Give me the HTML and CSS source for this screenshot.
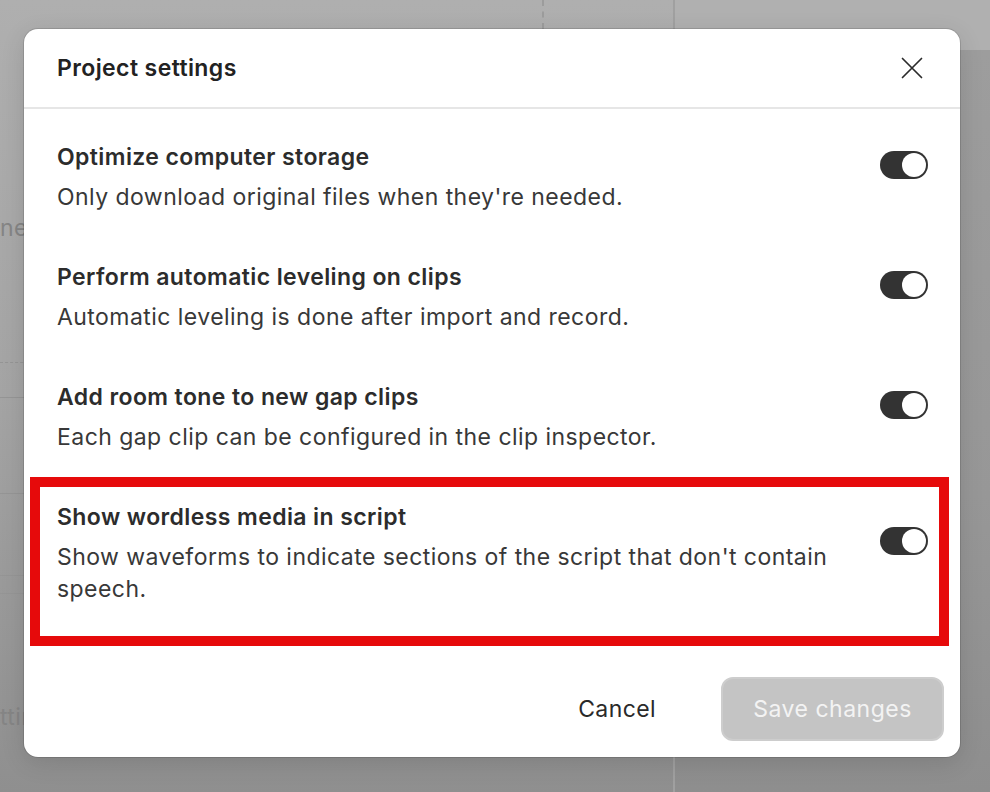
FILE: index.html
```html
<!DOCTYPE html>
<html lang="en">
<head>
<meta charset="utf-8">
<title>Project settings</title>
<link rel="stylesheet" href="styles.css">
</head>
<body>
<div class="app">
  <aside class="side">
    <div class="side-label first">ner</div>
    <div class="rule dashed r1"></div>
    <div class="rule r2"></div>
    <div class="rule r3"></div>
    <div class="rule r4"></div>
    <div class="rule r5"></div>
    <div class="rule r6"></div>
    <div class="side-label last">ttin</div>
  </aside>
  <main class="main">
    <div class="marker"></div>
  </main>
  <section class="panel">
    <div class="panel-top"></div>
    <div class="panel-body"></div>
  </section>
</div>

<div class="modal" role="dialog" aria-labelledby="dlg-title">
  <header class="modal-head">
    <h1 id="dlg-title" class="modal-title">Project settings</h1>
    <button class="close" aria-label="Close">
      <svg width="22" height="22" viewBox="0 0 22 22" fill="none" stroke="#2b2b2b" stroke-width="1.7" stroke-linecap="round">
        <path d="M1.5 1.5 L20.5 20.5 M20.5 1.5 L1.5 20.5"/>
      </svg>
    </button>
  </header>
  <div class="modal-body">
    <div class="setting">
      <div class="setting-text">
        <div class="setting-title">Optimize computer storage</div>
        <div class="setting-desc">Only download original files when they're needed.</div>
      </div>
      <span class="toggle on"><span class="knob"></span></span>
    </div>
    <div class="setting">
      <div class="setting-text">
        <div class="setting-title">Perform automatic leveling on clips</div>
        <div class="setting-desc">Automatic leveling is done after import and record.</div>
      </div>
      <span class="toggle on"><span class="knob"></span></span>
    </div>
    <div class="setting">
      <div class="setting-text">
        <div class="setting-title">Add room tone to new gap clips</div>
        <div class="setting-desc">Each gap clip can be configured in the clip inspector.</div>
      </div>
      <span class="toggle on"><span class="knob"></span></span>
    </div>
    <div class="setting highlighted">
      <div class="setting-text">
        <div class="setting-title">Show wordless media in script</div>
        <div class="setting-desc">Show waveforms to indicate sections of the script that don't contain speech.</div>
      </div>
      <span class="toggle on"><span class="knob"></span></span>
    </div>
  </div>
  <footer class="modal-foot">
    <button class="btn-cancel">Cancel</button>
    <button class="btn-save" disabled>Save changes</button>
  </footer>
</div>
</body>
</html>
```
FILE: styles.css
```css
* { box-sizing: border-box; }

html, body {
  margin: 0;
  padding: 0;
  width: 990px;
  height: 792px;
  overflow: hidden;
}

body {
  font-family: Inter, "Noto Sans", sans-serif;
  background: #aaaaaa;
  position: relative;
}

/* dimmed app behind the dialog */
.app {
  display: flex;
  width: 990px;
  height: 792px;
  background: linear-gradient(to bottom, #afafaf 0%, #a4a4a4 50%, #8f8f8f 100%);
}

.side {
  width: 260px;
  flex: none;
  display: flex;
  flex-direction: column;
  color: #858585;
}

.side-label {
  font-size: 23px;
  line-height: 26px;
  white-space: nowrap;
  letter-spacing: 0.4px;
}
.side-label.first { margin-top: 215px; }
.side-label.last { margin-top: 28px; }

.rule { height: 1px; background: #959595; flex: none; }
.rule.dashed {
  background: none;
  border-top: 1px dashed #959595;
}
.r1 { margin-top: 121px; }
.r2 { margin-top: 34px; }
.r3 { margin-top: 95px; }
.r4 { margin-top: 81px; }
.r5 { margin-top: 17px; }
.r6 { margin-top: 81px; }

.main {
  flex: 1;
  display: flex;
  padding-left: 282px;
}
.marker {
  width: 0;
  height: 29px;
  border-left: 2px dashed #9c9c9c;
}

.panel {
  width: 317px;
  flex: none;
  display: flex;
  flex-direction: column;
  border-left: 2px solid #a0a0a0;
}
.panel-top { height: 50px; background: #b0b0b0; }
.panel-body {
  flex: 1;
  background: linear-gradient(to bottom, #9d9d9d 0%, #979797 60%, #8e8e8e 100%);
}

/* dialog */
.modal {
  position: absolute;
  left: 24px;
  top: 29px;
  width: 936px;
  background: #ffffff;
  border-radius: 14px;
  box-shadow: 0 0 0 1px rgba(0, 0, 0, 0.12), 0 6px 24px rgba(0, 0, 0, 0.12);
  color: #2a2a2a;
  display: flex;
  flex-direction: column;
}

.modal-head {
  height: 80px;
  display: flex;
  align-items: center;
  justify-content: space-between;
  padding: 0 37px 0 33px;
  border-bottom: 2px solid #e6e6e6;
}

.modal-title {
  margin: 0;
  font-size: 23px;
  line-height: 32px;
  font-weight: 600;
  letter-spacing: 0.4px;
  color: #222222;
}

.close {
  width: 22px;
  height: 22px;
  padding: 0;
  border: 0;
  background: none;
  display: flex;
}

.modal-body {
  padding: 32px 32px 0 33px;
  display: flex;
  flex-direction: column;
  gap: 48px;
}

.setting {
  position: relative;
  display: flex;
  align-items: center;
  justify-content: space-between;
  gap: 40px;
}

.setting.highlighted::after {
  content: "";
  position: absolute;
  top: -24px;
  left: -27px;
  right: -21px;
  bottom: -41px;
  border: 10px solid #e60a0b;
  pointer-events: none;
}

.setting-text {
  display: flex;
  flex-direction: column;
  gap: 8px;
}

.setting-title {
  font-size: 23px;
  line-height: 32px;
  font-weight: 600;
  letter-spacing: 0.4px;
  color: #2c2c2c;
}

.setting-desc {
  font-size: 23px;
  line-height: 32px;
  font-weight: 400;
  letter-spacing: 0.45px;
  color: #383838;
}

.toggle {
  flex: none;
  width: 48px;
  height: 28px;
  border-radius: 14px;
  background: #333333;
  padding: 2px;
  display: flex;
  justify-content: flex-end;
  margin-bottom: 24px;
}
.knob {
  width: 24px;
  height: 24px;
  border-radius: 50%;
  background: #ffffff;
}

.modal-foot {
  display: flex;
  justify-content: flex-end;
  align-items: center;
  gap: 41px;
  padding: 72px 16px 16px 0;
}

.btn-cancel {
  font-family: inherit;
  font-size: 23px;
  letter-spacing: 0.4px;
  color: #2a2a2a;
  background: none;
  border: 0;
  padding: 0 24px;
  height: 64px;
}

.btn-save {
  font-family: inherit;
  font-size: 23px;
  letter-spacing: 0.5px;
  width: 223px;
  height: 64px;
  border-radius: 12px;
  background: #c4c4c4;
  border: 2px solid #cdcdcd;
  color: #f3f3f3;
}
```
